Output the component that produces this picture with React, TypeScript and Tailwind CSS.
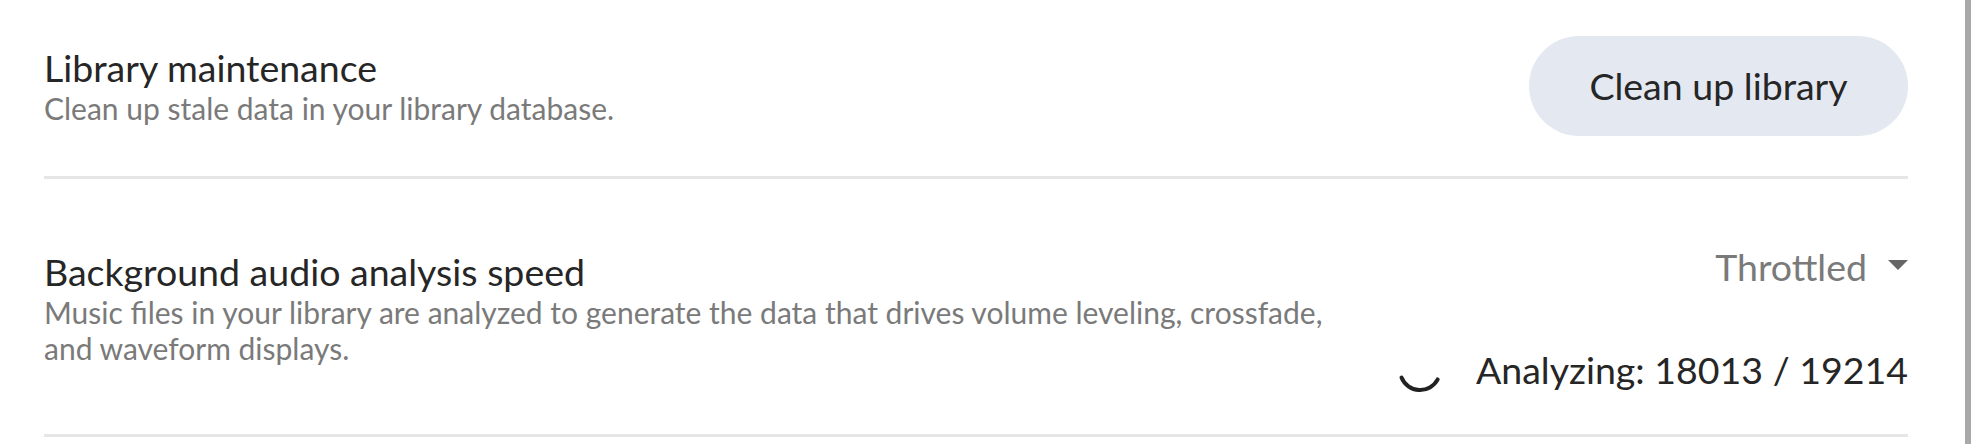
import React from "react";

const font = { fontFamily: "Lato, 'Noto Sans', sans-serif" };

function Spinner() {
  // only the lower arc of the progress ring is visible at this frame
  return (
    <svg width="48" height="48" viewBox="0 0 48 48" className="shrink-0 translate-y-[3px] text-[#222]">
      <path
        d="M5.5 28.5 A20 20 0 0 0 41.7 30.4"
        fill="none"
        stroke="currentColor"
        strokeWidth="4"
        strokeLinecap="round"
      />
    </svg>
  );
}

export default function App() {
  return (
    <div className="flex h-[444px] w-full bg-white overflow-hidden" style={font}>
      <main className="flex-1 pl-[44px] pr-[57px]">
        {/* Library maintenance */}
        <section className="flex items-center justify-between pt-9 pb-10 border-b-[3px] border-[#e6e6e6]">
          <div className="flex flex-col">
            <h2 className="text-[37.5px] leading-[44px] text-[#262626] font-normal">Library maintenance</h2>
            <p className="text-[30px] leading-[36px] text-[#7a7a7a]">
              Clean up stale data in your library database.
            </p>
          </div>
          <button className="h-[100px] w-[379px] rounded-full bg-[#e4e8f1] text-[37.5px] text-[#262626]">
            Clean up library
          </button>
        </section>

        {/* Background audio analysis */}
        <section className="flex justify-between border-b-[3px] border-[#e6e6e6] pb-[40px]">
          <div className="flex flex-col pt-[71px] max-w-[1300px]">
            <h2 className="text-[37.5px] leading-[44px] text-[#262626] font-normal">
              Background audio analysis speed
            </h2>
            <p className="text-[30px] leading-[36px] text-[#7a7a7a]">
              Music files in your library are analyzed to generate the data that drives volume leveling, crossfade,
              and waveform displays.
            </p>
          </div>
          <div className="flex flex-col items-end pt-[66px]">
            <div className="flex items-center gap-[21px] text-[37.5px] leading-[44px] text-[#7a7a7a]">
              <span>Throttled</span>
              <svg width="20" height="10" viewBox="0 0 20 10" className="mt-[-4px]">
                <path d="M0 0 L20 0 L10 10 Z" fill="#666" />
              </svg>
            </div>
            <div className="mt-[57px] flex items-center gap-[32px]">
              <Spinner />
              <span className="text-[37.5px] leading-[44px] text-[#262626]">Analyzing: 18013 / 19214</span>
            </div>
          </div>
        </section>
      </main>
      <div className="w-[6px] h-full bg-[#a8a8a8]" />
    </div>
  );
}
